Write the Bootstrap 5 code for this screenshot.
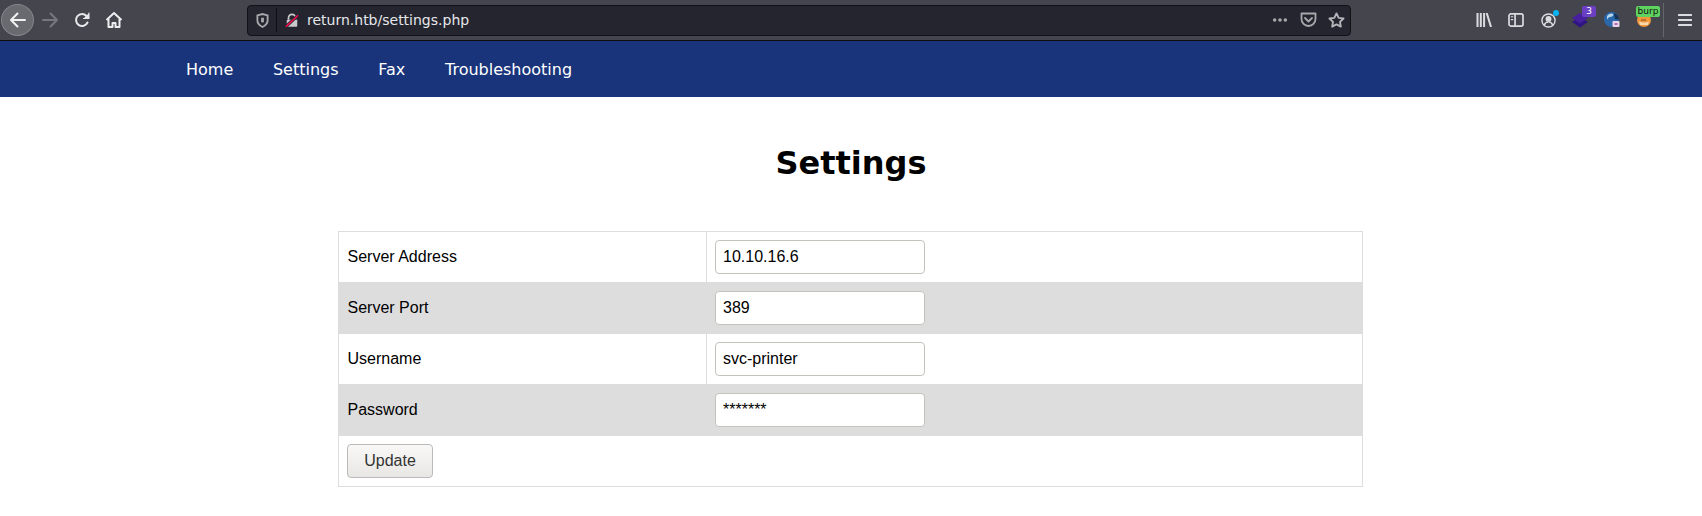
<!DOCTYPE html>
<html lang="en">
<head>
  <meta charset="UTF-8">
  <title>Settings</title>
  <meta name="viewport" content="width=device-width, initial-scale=1">
  <link href="https://cdn.jsdelivr.net/npm/bootstrap@5.3.3/dist/css/bootstrap.min.css" rel="stylesheet">
  <style>
    body { background: #fff; color: #000; font-family: "Liberation Sans", Arial, sans-serif; font-size: 16px; overflow: hidden; }

    .ff-toolbar { height: 41px; background: #44454d; border-bottom: 1px solid #0c0c0d; padding: 0 1px; }
    .tool-slot { width: 32px; height: 32px; flex: none; position: relative; }
    .tool-slot svg { display: block; }
    .back-slot { width: 33px; background: #696a70; border: 1px solid #84858a; border-radius: 50%; }
    .url-box { width: 1104px; height: 31px; margin-left: 117px; background: #24252f; border: 1px solid #111218; border-radius: 4px; color: #e6e7ea; font-family: "DejaVu Sans", sans-serif; font-size: 14px; }
    .url-shield { width: 27px; margin-left: 1px; }
    .url-sep { width: 1px; height: 24px; background: #0d0e13; }
    .url-lock { width: 30px; padding-left: 8px; }
    .url-actions { width: 28px; }
    .tool-right { margin-left: auto; }
    .tool-divider { width: 1px; height: 34px; background: #66676d; margin: 0 5px 0 3px; }
    .count-tag { position: absolute; top: 2px; left: 18px; width: 14px; height: 11px; background: #6a3fc4; border-radius: 2px; color: #fff; font: 9px/11px "DejaVu Sans", sans-serif; text-align: center; }
    .burp-tag { position: absolute; top: 2px; left: 8px; width: 24px; height: 11px; background: #5fd35f; border-radius: 2px; color: #111; font: 9px/10px "DejaVu Sans", sans-serif; text-align: center; }

    .site-nav { height: 56px; background: #19347b; padding-left: 166px; font-family: "DejaVu Sans", sans-serif; }
    .site-nav .nav-link { padding: 1px 20px 0; color: #fff; font-size: 16px; line-height: 55px; }
    .site-nav .nav-item:nth-child(n+2) .nav-link { margin-left: -0.3px; }

    .page-title { font-family: "DejaVu Sans", sans-serif; font-weight: 700; font-size: 32px; line-height: 38px; text-align: center; margin: 47px 0 49px; color: #000; }

    .settings-table { width: 1025px; margin: 0 0 0 338px; border-collapse: collapse; color: #000; table-layout: fixed; }
    .settings-table > tbody > tr > td { border: 1px solid #ddd; padding: 8px; vertical-align: middle; background: transparent; box-shadow: none; color: #000; }
    .settings-table .label-col { width: 368px; padding-left: 8.5px; }
    .settings-table tr.grey-row > td { background: #ddd; }
    .field-input { width: 210px; height: 34px; padding: 0 7px; border: 1px solid #c6c3be; border-radius: 4px; font-size: 16px; color: #000; background: #fff; box-shadow: none; }
    .update-btn { width: 86px; height: 34px; padding: 0; font-size: 16px; color: #333; border: 1px solid #bbb; border-radius: 4px; background: linear-gradient(#f9f8f7, #e9e7e4); }
  </style>
</head>
<body>

  <div class="ff-toolbar d-flex align-items-center">
    <div class="tool-slot back-slot d-flex align-items-center justify-content-center">
      <svg width="18" height="18" viewBox="0 0 18 18" fill="none" stroke="#f2f2f3" stroke-width="2" stroke-linecap="round" stroke-linejoin="round"><path d="M16 9H2M8.5 2.5 2 9l6.500 6.500"/></svg>
    </div>
    <div class="tool-slot d-flex align-items-center justify-content-center">
      <svg width="18" height="18" viewBox="0 0 18 18" fill="none" stroke="#77787d" stroke-width="2" stroke-linecap="round" stroke-linejoin="round"><path d="M2 9h14M9.500 2.500 16 9l-6.500 6.500"/></svg>
    </div>
    <div class="tool-slot d-flex align-items-center justify-content-center">
      <svg width="18" height="18" viewBox="0 0 18 18" fill="none" stroke="#e8e8ea" stroke-width="2" stroke-linecap="round" stroke-linejoin="round"><path d="M14.500 11.500A6 6 0 1 1 13.500 5L15.500 7"/><path d="M16 2v5.500h-5.500" fill="#e8e8ea" stroke-width="1"/></svg>
    </div>
    <div class="tool-slot d-flex align-items-center justify-content-center">
      <svg width="18" height="18" viewBox="0 0 18 18" fill="none" stroke="#eeeef0" stroke-width="2" stroke-linejoin="round"><path d="M1.500 9 9 2l7.500 7"/><path d="M3.500 8v8h4v-4h3v4h4V8"/></svg>
    </div>

    <div class="url-box d-flex align-items-center">
      <div class="url-shield d-flex justify-content-center">
        <svg width="13" height="15" viewBox="0 0 14 16" fill="none" stroke="#a8a9ad" stroke-width="2"><path d="M1.500 2.500 7 1l5.500 1.500V8c0 3-2.500 5.500-5.500 7C4 13.500 1.500 11 1.500 8Z"/><path d="M7 5v5" stroke-width="3"/></svg>
      </div>
      <div class="url-sep"></div>
      <div class="url-lock d-flex">
        <svg width="14" height="15" viewBox="0 0 16 16"><path d="M4 7V5a4 4 0 0 1 8 0v2" fill="none" stroke="#c9c9cc" stroke-width="2"/><rect x="2" y="7" width="12" height="8" rx="1" fill="#c9c9cc"/><path d="M1 15 15 2" stroke="#24252f" stroke-width="3.500"/><path d="M1 15 15 2" stroke="#ff0d4d" stroke-width="1.600"/></svg>
      </div>
      <span>return.htb/settings.php</span>
      <div class="url-actions ms-auto d-flex justify-content-center">
        <svg width="16" height="6" viewBox="0 0 18 6" fill="#a8a9ad"><circle cx="3" cy="3" r="2"/><circle cx="9" cy="3" r="2"/><circle cx="15" cy="3" r="2"/></svg>
      </div>
      <div class="url-actions d-flex justify-content-center">
        <svg width="17" height="16" viewBox="0 0 17 16" fill="none" stroke="#a8a9ad" stroke-width="1.800" stroke-linecap="round" stroke-linejoin="round"><path d="M1.500 1.500h14V7a7 7 0 0 1-14 0Z"/><path d="m5 6 3.500 3.500L12 6"/></svg>
      </div>
      <div class="url-actions d-flex justify-content-center">
        <svg width="17" height="16" viewBox="0 0 18 17" fill="none" stroke="#b4b5b9" stroke-width="2" stroke-linejoin="round"><path d="m9 1.500 2.300 4.700 5.200.700-3.800 3.600.900 5.100L9 13.200l-4.600 2.400.900-5.100L1.500 6.900l5.200-.700Z"/></svg>
      </div>
    </div>

    <div class="tool-right d-flex align-items-center">
      <div class="tool-slot d-flex align-items-center justify-content-center">
        <svg width="16" height="14" viewBox="0 0 16 14" fill="none" stroke="#dcdce0" stroke-width="2"><path d="M1.500 0v14M4.800 0v14M8.100 0v14M10.700 0l4.300 14"/></svg>
      </div>
      <div class="tool-slot d-flex align-items-center justify-content-center">
        <svg width="16" height="14" viewBox="0 0 17 15" fill="none" stroke="#dcdce0" stroke-width="1.800"><rect x="1" y="1" width="15" height="13" rx="2"/><path d="M7.500 1v13"/><path d="M3 4h2.500M3 7h2.500" stroke-width="1.300"/></svg>
      </div>
      <div class="tool-slot d-flex align-items-center justify-content-center">
        <svg width="15" height="15" viewBox="0 0 16 16" fill="none" stroke="#dcdce0" stroke-width="1.500"><circle cx="8" cy="8" r="7"/><circle cx="8" cy="6.300" r="2.400" fill="#dcdce0"/><path d="M3.500 13c.8-2.500 2.500-3.500 4.500-3.500s3.700 1 4.500 3.500"/></svg>
        <svg class="position-absolute top-0 end-0" width="32" height="32" viewBox="0 0 32 32"><circle cx="24" cy="9" r="3" fill="#0bb3f0"/></svg>
      </div>
      <div class="tool-slot d-flex align-items-center justify-content-center">
        <svg width="16" height="16" viewBox="0 0 16 16"><path d="M8 5l8 5-8 5.500L0 10Z" fill="#2f1484"/><path d="M8 1l8 5-8 5.500L0 6Z" fill="#47209f"/></svg>
        <span class="count-tag">3</span>
      </div>
      <div class="tool-slot d-flex align-items-center justify-content-center">
        <svg width="16" height="16" viewBox="0 0 16 16"><circle cx="7.500" cy="7.500" r="7.500" fill="#2a68ab"/><path d="M3 4c2-3 5-3 6-2s-1 3-3 3-2 3-3 2Z" fill="#b4d4ec"/><path d="M10 1a7.500 7.500 0 0 1 5 6.500L11 7Z" fill="#16304f"/><rect x="8.500" y="9" width="7" height="6" rx="1" fill="#e8d4e8"/><rect x="10.500" y="11" width="3" height="2" fill="#b56ab5"/></svg>
      </div>
      <div class="tool-slot d-flex align-items-center justify-content-center">
        <svg width="16" height="16" viewBox="0 0 16 16"><circle cx="8" cy="8" r="7" fill="#f0973a"/><path d="M3 9c2 2 8 2 10 0l-1 4H4Z" fill="#f7d9b0"/><path d="M5 8h5" stroke="#7a4a20" stroke-width="1"/></svg>
        <span class="burp-tag">burp</span>
      </div>
      <div class="tool-divider"></div>
      <div class="tool-slot d-flex align-items-center justify-content-center">
        <svg width="14" height="12" viewBox="0 0 14 12" fill="#dcdce0"><rect width="14" height="2" rx=".5"/><rect y="5" width="14" height="2" rx=".5"/><rect y="10" width="14" height="2" rx=".5"/></svg>
      </div>
    </div>
  </div>

  <ul class="nav site-nav">
    <li class="nav-item"><a class="nav-link" href="#">Home</a></li>
    <li class="nav-item"><a class="nav-link" href="#">Settings</a></li>
    <li class="nav-item"><a class="nav-link" href="#">Fax</a></li>
    <li class="nav-item"><a class="nav-link" href="#">Troubleshooting</a></li>
  </ul>

  <h1 class="page-title">Settings</h1>

  <table class="table settings-table">
    <tbody>
      <tr>
        <td class="label-col">Server Address</td>
        <td><input type="text" class="form-control field-input" value="10.10.16.6"></td>
      </tr>
      <tr class="grey-row">
        <td class="label-col">Server Port</td>
        <td><input type="text" class="form-control field-input" value="389"></td>
      </tr>
      <tr>
        <td class="label-col">Username</td>
        <td><input type="text" class="form-control field-input" value="svc-printer"></td>
      </tr>
      <tr class="grey-row">
        <td class="label-col">Password</td>
        <td><input type="text" class="form-control field-input" value="*******"></td>
      </tr>
      <tr>
        <td colspan="2"><button type="button" class="btn update-btn">Update</button></td>
      </tr>
    </tbody>
  </table>

  <script src="https://cdn.jsdelivr.net/npm/bootstrap@5.3.3/dist/js/bootstrap.bundle.min.js"></script>
</body>
</html>
